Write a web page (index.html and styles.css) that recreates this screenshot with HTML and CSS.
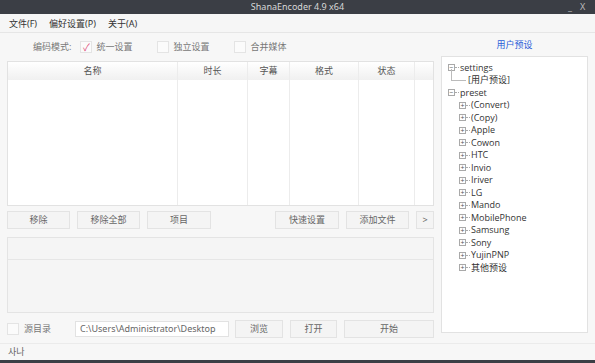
FILE: index.html
```html
<!DOCTYPE html>
<html lang="zh-CN">
<head>
    <meta charset="UTF-8">
    <title>ShanaEncoder 4.9 x64</title>
    <link rel="stylesheet" href="styles.css">
</head>
<body>
    <div class="window">
        <div class="titlebar">
            <span class="title">ShanaEncoder 4.9 x64</span>
            <span class="win-btn min">_</span>
            <span class="win-btn close">X</span>
        </div>

        <div class="menubar">
            <span class="menu-item">文件(F)</span>
            <span class="menu-item">偏好设置(P)</span>
            <span class="menu-item">关于(A)</span>
        </div>

        <div class="main">
            <div class="left">
                <div class="options">
                    <span class="opt-label">编码模式:</span>
                    <span class="check checked">&#10003;</span>
                    <span class="opt-text">统一设置</span>
                    <span class="check"></span>
                    <span class="opt-text">独立设置</span>
                    <span class="check"></span>
                    <span class="opt-text">合并媒体</span>
                </div>

                <div class="file-table">
                    <div class="thead">
                        <div class="col c-name">名称</div>
                        <div class="col c-time">时长</div>
                        <div class="col c-sub">字幕</div>
                        <div class="col c-fmt">格式</div>
                        <div class="col c-state">状态</div>
                        <div class="col c-rest"></div>
                    </div>
                    <div class="tbody">
                        <div class="col c-name"></div>
                        <div class="col c-time"></div>
                        <div class="col c-sub"></div>
                        <div class="col c-fmt"></div>
                        <div class="col c-state"></div>
                        <div class="col c-rest"></div>
                    </div>
                </div>

                <div class="btn-row">
                    <button class="btn w63">移除</button>
                    <button class="btn w63">移除全部</button>
                    <button class="btn w64">项目</button>
                    <span class="spacer"></span>
                    <button class="btn w64">快速设置</button>
                    <button class="btn w63">添加文件</button>
                    <button class="btn w18">&gt;</button>
                </div>

                <div class="log">
                    <div class="log-head"></div>
                </div>

                <div class="bottom-row">
                    <span class="check"></span>
                    <span class="src-label">源目录</span>
                    <div class="path">C:\Users\Administrator\Desktop</div>
                    <button class="btn w48">浏览</button>
                    <button class="btn w47">打开</button>
                    <button class="btn grow">开始</button>
                </div>
            </div>

            <div class="right">
                <div class="preset-title">用户预设</div>
                <div class="tree">
                    <div class="node root"><span class="box">&minus;</span><span class="dash"></span>settings</div>
                    <div class="node leaf"><span class="elbow"></span>[用户预设]</div>
                    <div class="node root"><span class="box">&minus;</span><span class="dash"></span>preset</div>
                    <div class="children">
                        <div class="node child"><span class="box">+</span><span class="dash"></span>(Convert)</div>
                        <div class="node child"><span class="box">+</span><span class="dash"></span>(Copy)</div>
                        <div class="node child"><span class="box">+</span><span class="dash"></span>Apple</div>
                        <div class="node child"><span class="box">+</span><span class="dash"></span>Cowon</div>
                        <div class="node child"><span class="box">+</span><span class="dash"></span>HTC</div>
                        <div class="node child"><span class="box">+</span><span class="dash"></span>Invio</div>
                        <div class="node child"><span class="box">+</span><span class="dash"></span>Iriver</div>
                        <div class="node child"><span class="box">+</span><span class="dash"></span>LG</div>
                        <div class="node child"><span class="box">+</span><span class="dash"></span>Mando</div>
                        <div class="node child"><span class="box">+</span><span class="dash"></span>MobilePhone</div>
                        <div class="node child"><span class="box">+</span><span class="dash"></span>Samsung</div>
                        <div class="node child"><span class="box">+</span><span class="dash"></span>Sony</div>
                        <div class="node child"><span class="box">+</span><span class="dash"></span>YujinPNP</div>
                        <div class="node child"><span class="box">+</span><span class="dash"></span>其他预设</div>
                    </div>
                </div>
            </div>
        </div>

        <div class="statusbar">사나</div>
        <div class="bottom-edge"></div>
    </div>
</body>
</html>
```

FILE: styles.css
```css
* {
    margin: 0;
    padding: 0;
    box-sizing: border-box;
}

body {
    width: 595px;
    height: 363px;
    overflow: hidden;
    background: #f7f7f7;
    font-family: "Noto Sans", "Noto Sans CJK SC", sans-serif;
    font-size: 9px;
    color: #555;
}

.window {
    display: flex;
    flex-direction: column;
    height: 363px;
}

/* title bar */
.titlebar {
    position: relative;
    height: 14px;
    background: #3b3e45;
    color: #d8d8d8;
    font-size: 9px;
    line-height: 14px;
    text-align: center;
}

.win-btn {
    position: absolute;
    top: 0;
    color: #bbb;
    font-size: 9px;
}

.win-btn.min { left: 568px; }
.win-btn.close { left: 580px; }

/* menu */
.menubar {
    height: 19px;
    display: flex;
    align-items: center;
    padding: 2px 0 0 9px;
    gap: 12px;
    background: #f6f6f6;
    border-bottom: 1px solid #e6e6e6;
    color: #333;
}

.main {
    display: flex;
    gap: 7px;
    padding: 0 7px 0 7px;
    height: 308px;
}

.left {
    width: 427px;
    display: flex;
    flex-direction: column;
}

.right {
    width: 147px;
    display: flex;
    flex-direction: column;
}

/* options row */
.options {
    height: 28px;
    display: flex;
    align-items: center;
    padding-left: 26px;
    color: #777;
}

.opt-label { margin-right: 9px; }

.check {
    width: 12px;
    height: 12px;
    border: 1px solid #e4e4e4;
    background: #fbfbfb;
    display: inline-flex;
    align-items: center;
    justify-content: center;
    color: #e0507a;
    font-size: 10px;
    flex: none;
}

.opt-text {
    margin-left: 4px;
    margin-right: 25px;
}

/* file table */
.file-table {
    height: 145px;
    border: 1px solid #e2e2e2;
    background: #fff;
    display: flex;
    flex-direction: column;
}

.thead {
    height: 18px;
    display: flex;
    background: linear-gradient(#ffffff, #f0f0f0);
    color: #555;
}

.thead .col {
    line-height: 17px;
    text-align: center;
}

.tbody {
    flex: 1;
    display: flex;
}

.col {
    border-right: 1px solid #ececec;
}

.c-name { width: 170px; }
.c-time { width: 70px; }
.c-sub { width: 42px; }
.c-fmt { width: 69px; }
.c-state { width: 56px; }
.c-rest { flex: 1; border-right: none; }

/* buttons */
.btn-row {
    margin-top: 5px;
    height: 18px;
    display: flex;
    gap: 7px;
}

.spacer { flex: 1; }

.btn {
    height: 18px;
    border: 1px solid #e3e3e3;
    background: #f4f4f4;
    color: #666;
    font-family: inherit;
    font-size: 9px;
}

.w63 { width: 63px; }
.w64 { width: 64px; }
.w18 { width: 18px; }
.w48 { width: 48px; }
.w47 { width: 47px; }
.grow { flex: 1; }

/* log */
.log {
    margin-top: 8px;
    height: 76px;
    border: 1px solid #e4e4e4;
    background: #f5f5f5;
}

.log-head {
    height: 22px;
    border-bottom: 1px solid #e6e6e6;
}

/* bottom row */
.bottom-row {
    margin-top: 7px;
    height: 18px;
    display: flex;
    align-items: center;
    gap: 7px;
}

.src-label {
    width: 44px;
    margin-left: -2px;
    color: #777;
}

.path {
    width: 154px;
    height: 16px;
    background: #fff;
    border: 1px solid #e2e2e2;
    line-height: 14px;
    padding-left: 4px;
    color: #666;
    margin-right: -1px;
}

/* preset tree */
.preset-title {
    height: 23px;
    line-height: 18px;
    text-align: center;
    color: #2a5bd7;
    padding-top: 3px;
}

.tree {
    height: 277px;
    background: #fff;
    border: 1px solid #e2e2e2;
    padding: 5px 0 0 6px;
    font-family: "Open Sans", "Noto Sans CJK SC", sans-serif;
    color: #333;
}

.node {
    height: 12.5px;
    line-height: 12px;
    display: flex;
    align-items: center;
    white-space: nowrap;
}

.box {
    width: 7px;
    height: 7px;
    border: 1px solid #a9a9a9;
    font-size: 7px;
    line-height: 5px;
    text-align: center;
    color: #555;
    flex: none;
    overflow: hidden;
}

.dash {
    width: 4px;
    border-top: 1px dotted #aaa;
    margin-right: 1px;
}

.leaf {
    padding-left: 3px;
}

.elbow {
    width: 15px;
    height: 12px;
    border-left: 1px solid #bbb;
    border-bottom: 1px solid #bbb;
    margin-top: -10px;
    margin-right: 2px;
}

.children {
    padding-left: 11px;
}

/* status bar */
.statusbar {
    margin-top: 5px;
    height: 18px;
    border-top: 1px solid #ebebeb;
    padding-left: 8px;
    line-height: 16px;
    color: #666;
    font-family: "Noto Sans CJK KR", sans-serif;
}

.bottom-edge {
    height: 3px;
    background: #3b3e45;
}
```
